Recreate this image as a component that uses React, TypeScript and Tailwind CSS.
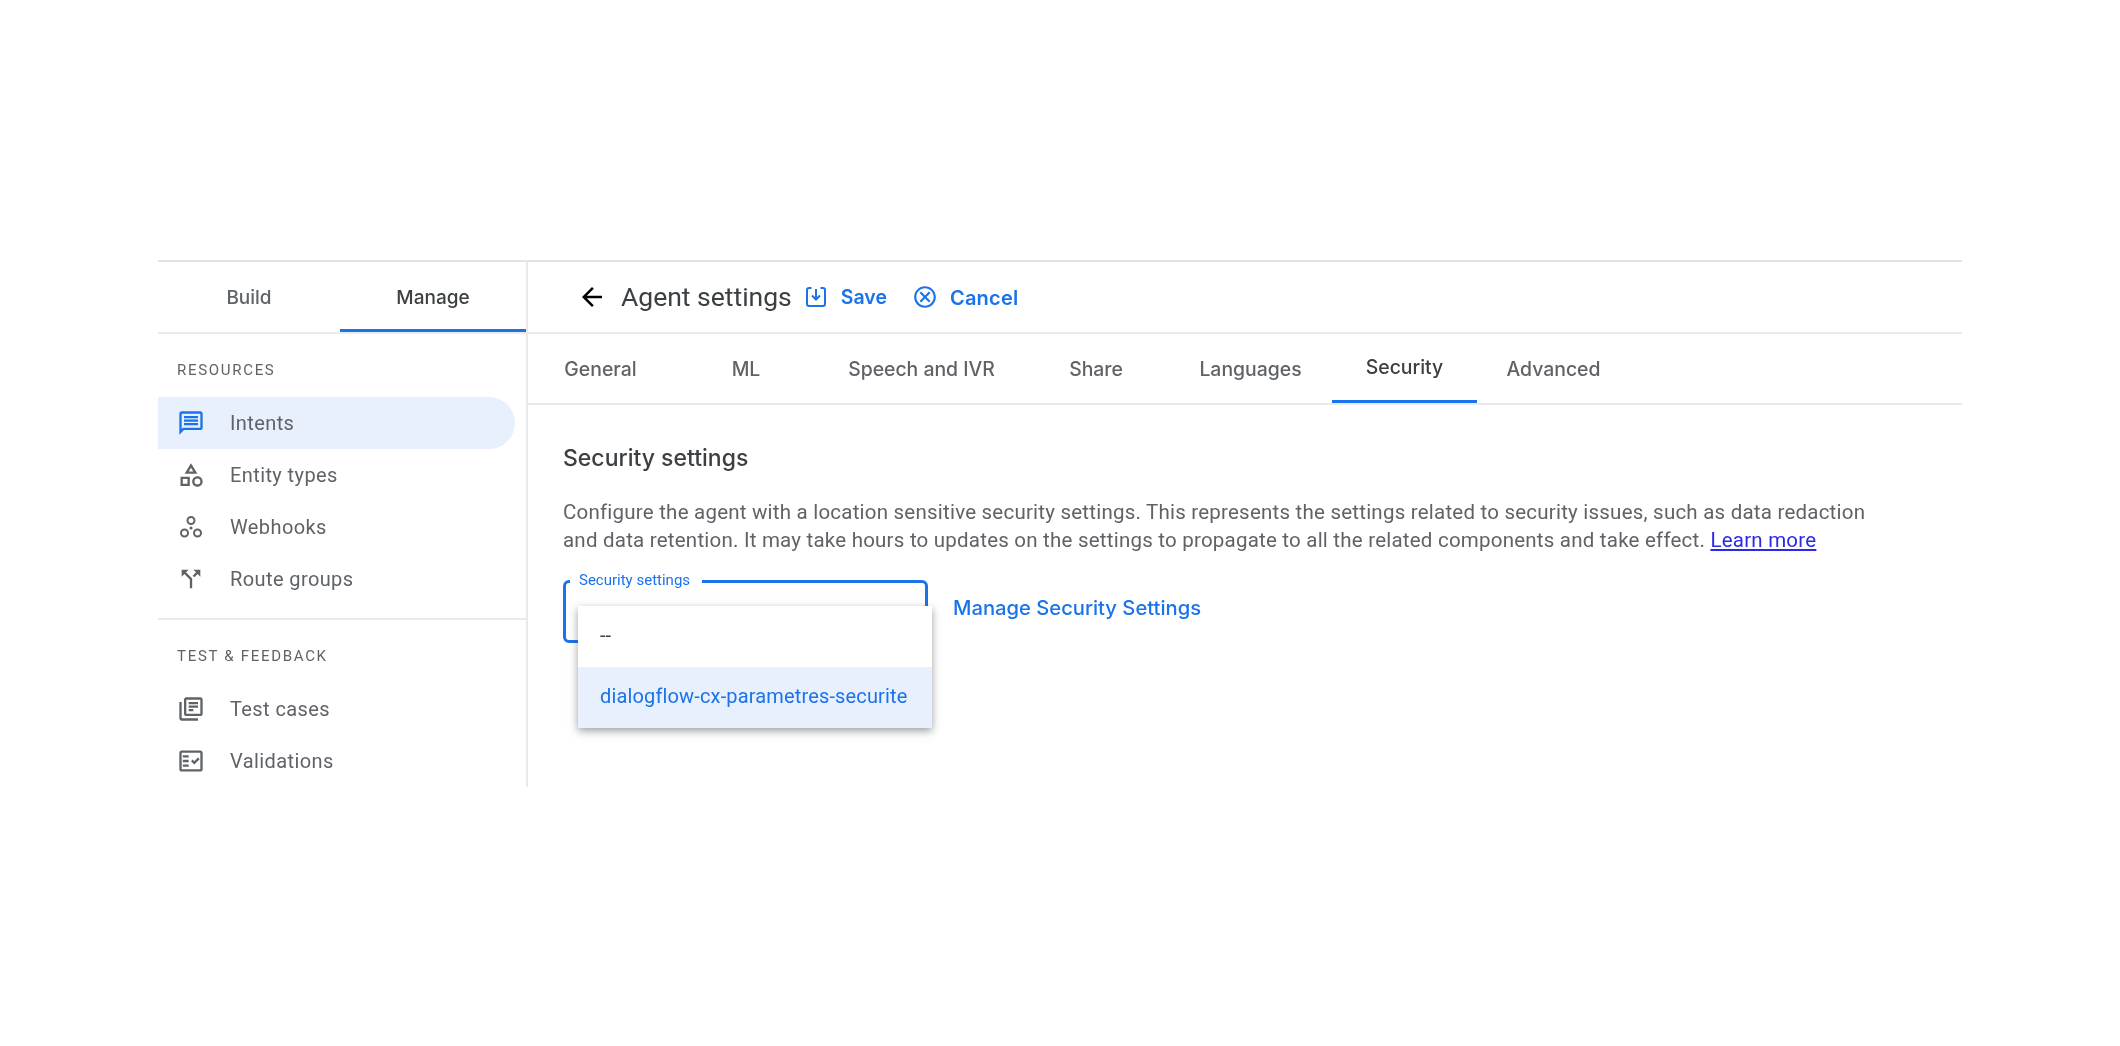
import {
  MdArrowBack,
  MdCallSplit,
  MdOutlineCancel,
  MdOutlineCategory,
  MdOutlineFactCheck,
  MdOutlineLibraryBooks,
  MdOutlineMessage,
} from "react-icons/md";

function WebhookIcon() {
  return (
    <svg width="28" height="28" viewBox="0 0 28 28" fill="none" stroke="currentColor" strokeWidth="2">
      <circle cx="14" cy="7.5" r="3.5" />
      <circle cx="7.5" cy="20" r="3.5" />
      <circle cx="20.5" cy="20" r="3.5" />
      <circle cx="14" cy="15" r="1.6" fill="currentColor" stroke="none" />
    </svg>
  );
}

function SaveIcon() {
  return (
    <svg width="24" height="24" viewBox="0 0 24 24" fill="none" stroke="currentColor" strokeWidth="2">
      <path d="M7.5 3H5a2 2 0 0 0-2 2v14a2 2 0 0 0 2 2h14a2 2 0 0 0 2-2V5a2 2 0 0 0-2-2h-2.5" />
      <path d="M12 4v10M8 10.5l4 4 4-4" />
    </svg>
  );
}

function NavItem({ icon, label, active }: { icon: React.ReactNode; label: string; active?: boolean }) {
  return (
    <div
      className={
        active
          ? "flex h-[52px] w-[357px] items-center rounded-r-full bg-[#e8f0fe] pl-[19px]"
          : "flex h-[52px] w-[357px] items-center pl-[19px]"
      }
    >
      <span className={active ? "flex w-[53px] text-[#1a73e8]" : "flex w-[53px] text-[#5f6368]"}>{icon}</span>
      <span className="text-[20px] tracking-[0.4px] text-[#5f6368]">{label}</span>
    </div>
  );
}

function Tab({ label, width, active }: { label: string; width: string; active?: boolean }) {
  return (
    <div
      className={
        active
          ? "flex h-full items-center justify-center border-b-[3px] border-[#1a73e8] pt-[3px] font-['Inter',sans-serif] text-[19.4px] font-medium text-[#3c4043] " + width
          : "flex h-full items-center justify-center pt-[3px] font-['Inter',sans-serif] text-[19.4px] font-medium text-[#5f6368] " + width
      }
    >
      {label}
    </div>
  );
}

export default function App() {
  return (
    <div className="flex h-screen items-center bg-white px-[158px] font-['Roboto',sans-serif] blur-[0.4px]">
      <div className="flex h-[527px] w-full overflow-hidden border-t-2 border-[#e3e4e8]">
        <div className="w-[370px] shrink-0 border-r-2 border-[#e8eaed]">
          <div className="flex h-[72px] border-b-2 border-[#e8eaed]">
            <div className="flex w-[182px] items-center justify-center pt-[3px] font-['Inter',sans-serif] text-[19px] font-medium text-[#5f6368]">Build</div>
            <div className="flex flex-1 items-center justify-center border-b-[3px] border-[#1a73e8] pt-[6px] font-['Inter',sans-serif] text-[19px] font-medium text-[#3c4043]">
              Manage
            </div>
          </div>
          <div className="border-b-2 border-[#e8eaed] pb-[13px]">
            <div className="flex h-[63px] items-center pl-[19px] pt-[10px] text-[15px] tracking-[1.7px] text-[#5f6368]">
              RESOURCES
            </div>
            <NavItem active icon={<MdOutlineMessage size={28} />} label="Intents" />
            <NavItem icon={<MdOutlineCategory size={28} />} label="Entity types" />
            <NavItem icon={<WebhookIcon />} label="Webhooks" />
            <NavItem icon={<MdCallSplit size={28} />} label="Route groups" />
          </div>
          <div className="flex h-[63px] items-center pl-[19px] pt-[10px] text-[15px] tracking-[1.7px] text-[#5f6368]">
            TEST &amp; FEEDBACK
          </div>
          <NavItem icon={<MdOutlineLibraryBooks size={28} />} label="Test cases" />
          <NavItem icon={<MdOutlineFactCheck size={28} />} label="Validations" />
        </div>

        <div className="min-w-0 flex-1">
          <div className="flex h-[72px] items-center border-b-2 border-[#e8eaed] pl-[49px]">
            <MdArrowBack size={30} className="text-black" />
            <span className="ml-[14px] text-[26.5px] text-[#3c4043]">Agent settings</span>
            <span className="ml-[12px] flex items-center text-[#1a73e8]">
              <SaveIcon />
            </span>
            <span className="ml-[13px] pt-[3px] font-['Inter',sans-serif] text-[19.5px] font-semibold text-[#1a73e8]">Save</span>
            <MdOutlineCancel size={26} className="ml-[25px] text-[#1a73e8]" />
            <span className="ml-[12px] pt-[3px] font-['Inter',sans-serif] text-[20px] font-semibold tracking-[0.2px] text-[#1a73e8]">Cancel</span>
          </div>

          <div className="flex h-[71px] border-b-2 border-[#e8eaed] pl-[35px]">
            <Tab label="General" width="w-[75px]" />
            <Tab label="ML" width="w-[30px] ml-[93px]" />
            <Tab label="Speech and IVR" width="w-[147px] ml-[87px]" />
            <Tab label="Share" width="w-[54px] ml-[74px]" />
            <Tab label="Languages" width="w-[103px] ml-[76px]" />
            <Tab active label="Security" width="w-[145px] ml-[30px]" />
            <Tab label="Advanced" width="w-[95px] ml-[29px]" />
          </div>

          <div className="pl-[35px] pr-[80px]">
            <h2 className="mt-[38px] font-['Inter',sans-serif] text-[23px] font-medium leading-[30px] text-[#3c4043]">Security settings</h2>
            <p className="mt-[25px] text-[20.5px] leading-[28.5px] tracking-[0.22px] text-[#5f6368]">
              Configure the agent with a location sensitive security settings. This represents the settings related to security issues, such as data redaction and data retention. It may take hours to updates on the settings to propagate to all the related components and take effect.{" "}
              <a className="text-[#2a2ae6] underline">Learn more</a>
            </p>
            <div className="mt-[25px] flex items-center">
              <div className="relative h-[63px] w-[365px] rounded-[6px] border-[3px] border-[#1a73e8]">
                <span className="absolute -top-[12px] left-[4px] bg-white pl-[9px] pr-[12px] text-[15px] leading-[18px] text-[#1a73e8]">
                  Security settings
                </span>
                <div className="absolute left-[12px] top-[23px] z-10 w-[354px] bg-white shadow-[0_3px_8px_rgba(60,64,67,0.5)]">
                  <div className="flex h-[61px] items-center pb-[2px] pl-[22px] text-[20px] text-[#3c4043]">--</div>
                  <div className="flex h-[61px] items-center bg-[#e8f0fe] pb-[2px] pl-[22px] text-[20px] tracking-[0.15px] text-[#1a73e8]">
                    dialogflow-cx-parametres-securite
                  </div>
                </div>
              </div>
              <span className="ml-[25px] -translate-y-[3px] font-['Inter',sans-serif] text-[20.2px] font-medium text-[#1a73e8]">Manage Security Settings</span>
            </div>
          </div>
        </div>
      </div>
    </div>
  );
}
